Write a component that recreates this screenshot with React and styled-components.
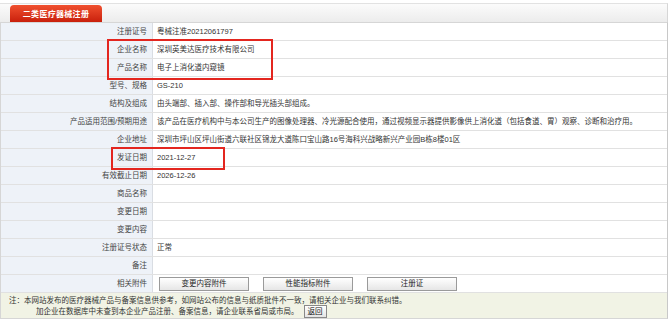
import React from 'react'
import styled, { createGlobalStyle } from 'styled-components'

const GlobalStyle = createGlobalStyle`
    html, body {
        margin: 0;
        padding: 0;
        background: #ffffff;
    }
    body {
        font-family: "Liberation Sans", "Noto Sans CJK SC", sans-serif;
        color: #333;
    }
`

const Page = styled.div`
    width: 668px;
    padding-top: 3px;
`

const Header = styled.div`
    height: 18px;
    display: flex;
    align-items: flex-end;
    padding-left: 10px;
    border-top: 1px solid #e2e2e2;
    border-right: 1px solid #d6d6d6;
    background: linear-gradient(#fbfbfb, #ececec);
`

const Tab = styled.div`
    width: 92px;
    height: 17px;
    display: flex;
    align-items: center;
    justify-content: center;
    border-radius: 4px 4px 0 0;
    background: linear-gradient(#f0502f, #c9200c);
    color: #ffffff;
    font-size: 8px;
    font-weight: bold;
    letter-spacing: 0.3px;
`

const Table = styled.div`
    border-left: 1px solid #d6d6d6;
    border-right: 1px solid #c8c8c8;
    border-top: 1px solid #d6d6d6;
`

const Group = styled.div`
    position: relative;
`

const Mark = styled.div`
    position: absolute;
    top: -2px;
    bottom: -3px;
    left: ${p => p.$left}px;
    width: ${p => p.$width}px;
    border: 2px solid #e3261f;
    pointer-events: none;
    z-index: 2;
`

const Row = styled.div`
    display: grid;
    grid-template-columns: 152px 1fr;
    height: 17px;
    border-bottom: 1px solid #e1e1e1;
    font-size: 7.5px;
    line-height: 17px;
`

const Label = styled.div`
    background: #eef2f8;
    border-right: 1px solid #d9dde3;
    text-align: right;
    padding-right: 5px;
    color: #444;
    white-space: nowrap;
`

const Value = styled.div`
    padding-left: 4px;
    color: #333;
    white-space: nowrap;
    display: flex;
    align-items: center;
    gap: 14px;
`

const FileButton = styled.span`
    width: 88px;
    height: 12px;
    line-height: 12px;
    text-align: center;
    border: 1px solid #9a9a9a;
    background: linear-gradient(#ffffff, #e6e6e6);
    color: #222;
    font-size: 7.5px;
    &:first-child {
        margin-left: 2px;
    }
`

const Note = styled.div`
    height: 26px;
    background: #f1f3e5;
    border-left: 1px solid #d6d6d6;
    border-right: 1px solid #c8c8c8;
    border-bottom: 1px solid #d6d6d6;
    font-size: 7.5px;
    color: #333;
    padding-top: 2px;
    box-sizing: border-box;
`

const NoteLine = styled.div`
    padding-left: ${p => p.$indent}px;
    height: 11px;
    line-height: 11px;
    display: flex;
    align-items: center;
    white-space: nowrap;
`

const BackButton = styled.span`
    margin-left: 5px;
    padding: 0 3px;
    height: 11px;
    line-height: 11px;
    border: 1px solid #888;
    background: linear-gradient(#ffffff, #e4e4e4);
    color: #111;
`

const rows1 = [
    ['注册证号', '粤械注准20212061797'],
]

const rows2 = [
    ['企业名称', '深圳英美达医疗技术有限公司'],
    ['产品名称', '电子上消化道内窥镜'],
]

const rows3 = [
    ['型号、规格', 'GS-210'],
    ['结构及组成', '由头端部、插入部、操作部和导光插头部组成。'],
    ['产品适用范围/预期用途', '该产品在医疗机构中与本公司生产的图像处理器、冷光源配合使用，通过视频显示器提供影像供上消化道（包括食道、胃）观察、诊断和治疗用。'],
    ['企业地址', '深圳市坪山区坪山街道六联社区锦龙大道陈口宝山路16号海科兴战略新兴产业园B栋8楼01区'],
]

const rows4 = [
    ['发证日期', '2021-12-27'],
]

const rows5 = [
    ['有效截止日期', '2026-12-26'],
    ['商品名称', ''],
    ['变更日期', ''],
    ['变更内容', ''],
    ['注册证号状态', '正常'],
    ['备注', ''],
]

const renderRows = list => list.map(([k, v]) => (
    <Row key={k}>
        <Label>{k}</Label>
        <Value>{v}</Value>
    </Row>
))

const App = () => {
    return (
        <Page>
            <GlobalStyle />
            <Header>
                <Tab>二类医疗器械注册</Tab>
            </Header>
            <Table>
                {renderRows(rows1)}
                <Group>
                    <Mark $left={106} $width={162} />
                    {renderRows(rows2)}
                </Group>
                {renderRows(rows3)}
                <Group>
                    <Mark $left={110} $width={110} />
                    {renderRows(rows4)}
                </Group>
                {renderRows(rows5)}
                <Row>
                    <Label>相关附件</Label>
                    <Value>
                        <FileButton>变更内容附件</FileButton>
                        <FileButton>性能指标附件</FileButton>
                        <FileButton>注册证</FileButton>
                    </Value>
                </Row>
            </Table>
            <Note>
                <NoteLine $indent={8}>注：本网站发布的医疗器械产品与备案信息供参考，如网站公布的信息与纸质批件不一致，请相关企业与我们联系纠错。</NoteLine>
                <NoteLine $indent={35}>
                    加企业在数据库中未查到本企业产品注册、备案信息，请企业联系省局或市局。
                    <BackButton>返回</BackButton>
                </NoteLine>
            </Note>
        </Page>
    )
}

export default App
